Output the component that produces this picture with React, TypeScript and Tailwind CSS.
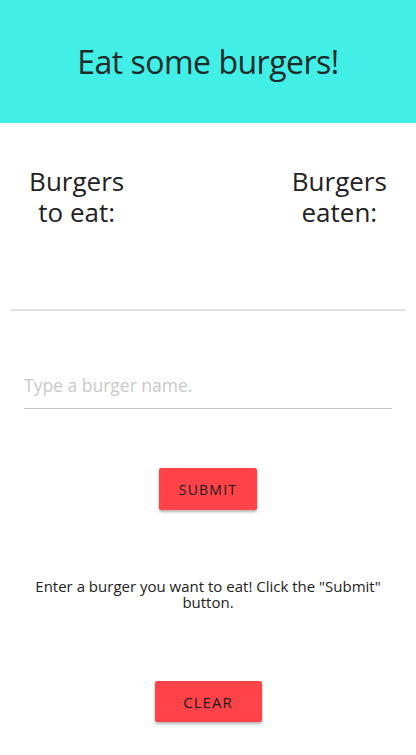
const font = { fontFamily: '"Open Sans", "Noto Sans", sans-serif' };

export default function App() {
  return (
    <div className="min-h-[755px] bg-white text-[#222]" style={font}>
      <header className="h-[123px] bg-[#41efe6] flex items-center justify-center">
        <h1 className="text-[32px] tracking-[-0.5px] text-[#1c2a2a]">Eat some burgers!</h1>
      </header>

      <div className="px-[11px]">
        <div className="grid grid-cols-3 pt-[43px] h-[186px]">
          <h2 className="text-center text-[26px] leading-[31px]">
            Burgers
            <br />
            to eat:
          </h2>
          <div />
          <h2 className="text-center text-[26px] leading-[31px]">
            Burgers
            <br />
            eaten:
          </h2>
        </div>
        <hr className="border-t-2 border-[#e0e0e0]" />
      </div>

      <form className="px-[24px] pt-[61px]" onSubmit={(e) => e.preventDefault()}>
        <input
          type="text"
          placeholder="Type a burger name."
          className="w-full border-b border-[#c4c4c4] pb-[10px] text-[17.5px] outline-none placeholder:text-[#c9c9c9]"
        />
        <div className="flex justify-center pt-[59px]">
          <button
            type="submit"
            className="w-[98px] h-[42px] rounded-[2px] bg-[#ff4349] text-[14px] tracking-[1.2px] text-[#1a1a1a] shadow-[0_2px_3px_rgba(0,0,0,0.3)]"
          >
            SUBMIT
          </button>
        </div>
      </form>

      <p className="text-center text-[15px] leading-[16px] px-[26px] pt-[68px] text-[#222]">
        Enter a burger you want to eat! Click the "Submit" button.
      </p>

      <div className="flex justify-center pt-[71px] pb-[33px]">
        <button className="w-[107px] h-[41px] rounded-[2px] bg-[#ff4349] text-[15px] tracking-[1px] text-[#1a1a1a] shadow-[0_2px_3px_rgba(0,0,0,0.3)]">
          CLEAR
        </button>
      </div>
    </div>
  );
}
